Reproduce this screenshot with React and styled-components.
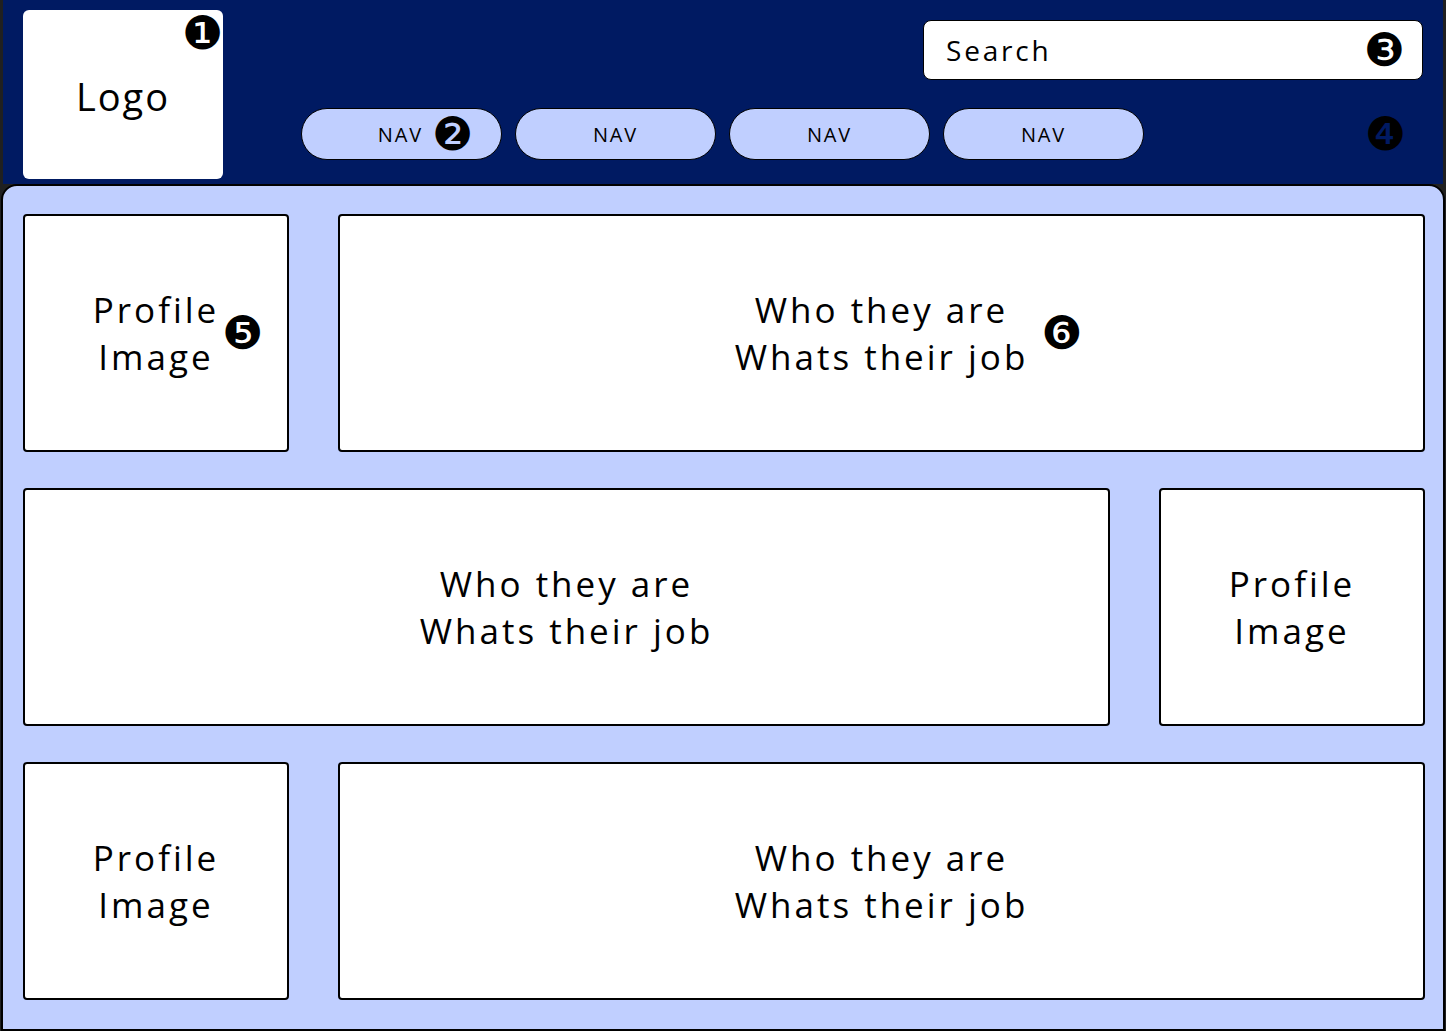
import React from "react";
import styled, { createGlobalStyle } from "styled-components";

const Global = createGlobalStyle`
  html, body { margin: 0; padding: 0; background: #202020; }
  body { font-family: "Open Sans", "Liberation Sans", sans-serif; color: #000; }
  * { box-sizing: border-box; }
`;

const Frame = styled.div`
  width: 1446px;
  height: 1031px;
  background: #202020;
  padding: 0 3px;
  display: flex;
  flex-direction: column;
  overflow: hidden;
`;

const Header = styled.header`
  height: 184px;
  flex: none;
  background: #001a62;
  display: flex;
  padding: 10px 20px 0 20px;
`;

const LogoBox = styled.div`
  position: relative;
  width: 200px;
  height: 169px;
  background: #fff;
  border-radius: 6px;
  display: flex;
  align-items: center;
  justify-content: center;
  font-size: 38px;
  letter-spacing: 2px;
  padding-top: 2px;
`;

const Badge = styled.span`
  font-family: "DejaVu Serif", "DejaVu Sans", serif;
  font-size: ${(p) => p.$size || 46}px;
  line-height: 1;
  letter-spacing: 0;
  color: #000;
  flex: none;
  display: inline-flex;
  align-items: center;
  margin-right: ${(p) => p.$mr || 0}px;
`;

const CornerBadge = styled(Badge)`
  position: absolute;
  top: 0;
  right: 0;
`;

const HeaderRight = styled.div`
  flex: 1;
  margin-left: 78px;
  display: flex;
  flex-direction: column;
`;

const SearchBox = styled.div`
  align-self: flex-end;
  margin-top: 10px;
  width: 500px;
  height: 60px;
  background: #fff;
  border: 1px solid #000;
  border-radius: 8px;
  display: flex;
  align-items: center;
  justify-content: space-between;
  padding: 0 17px 0 22px;
  font-size: 28px;
  letter-spacing: 2.8px;
`;

const NavRow = styled.div`
  margin-top: 28px;
  display: flex;
  align-items: center;
  gap: 13px;
`;

const NavPill = styled.div`
  width: 201px;
  height: 52px;
  background: #c0cfff;
  border: 1px solid #000;
  border-radius: 26px;
  display: flex;
  align-items: center;
  justify-content: center;
  gap: 9px;
  font-size: 20px;
  letter-spacing: 1.8px;
  padding-left: ${(p) => (p.$badge ? "48px" : "0")};
`;

const Spacer = styled.div`
  flex: 1;
`;

const Panel = styled.main`
  flex: 1;
  margin: 0 -2px;
  background: #c0cfff;
  border: 2px solid #000;
  border-radius: 16px 16px 0 0;
  padding: 28px 18px 26px 20px;
  display: flex;
  flex-direction: column;
  gap: 36px;
`;

const Row = styled.div`
  display: grid;
  grid-template-columns: ${(p) => (p.$reverse ? "1fr 266px" : "266px 1fr")};
  column-gap: 49px;
  height: 238px;
`;

const Card = styled.div`
  background: #fff;
  border: 2px solid #000;
  border-radius: 4px;
  display: flex;
  align-items: center;
  justify-content: center;
  text-align: center;
  font-size: 35px;
  line-height: 47px;
`;

const TextBlock = styled.div`
  position: relative;
  letter-spacing: 3px;
`;

const SideBadge = styled(Badge)`
  position: absolute;
  top: 50%;
  left: calc(100% + ${(p) => p.$gap}px);
  transform: translateY(-50%);
`;

const Profile = ({ badge }) => (
  <Card>
    <TextBlock>
      Profile
      <br />
      Image
      {badge && <SideBadge $gap={3}>{badge}</SideBadge>}
    </TextBlock>
  </Card>
);

const Info = ({ badge }) => (
  <Card>
    <TextBlock>
      Who they are
      <br />
      Whats their job
      {badge && <SideBadge $gap={13}>{badge}</SideBadge>}
    </TextBlock>
  </Card>
);

export default function App() {
  return (
    <>
      <Global />
      <Frame>
        <Header>
          <LogoBox>
            Logo
            <CornerBadge>❶</CornerBadge>
          </LogoBox>
          <HeaderRight>
            <SearchBox>
              <span>Search</span>
              <Badge>❸</Badge>
            </SearchBox>
            <NavRow>
              <NavPill $badge>
                NAV <Badge>❷</Badge>
              </NavPill>
              <NavPill>NAV</NavPill>
              <NavPill>NAV</NavPill>
              <NavPill>NAV</NavPill>
              <Spacer />
              <Badge $mr={17}>❹</Badge>
            </NavRow>
          </HeaderRight>
        </Header>
        <Panel>
          <Row>
            <Profile badge="❺" />
            <Info badge="❻" />
          </Row>
          <Row $reverse>
            <Info />
            <Profile />
          </Row>
          <Row>
            <Profile />
            <Info />
          </Row>
        </Panel>
      </Frame>
    </>
  );
}
